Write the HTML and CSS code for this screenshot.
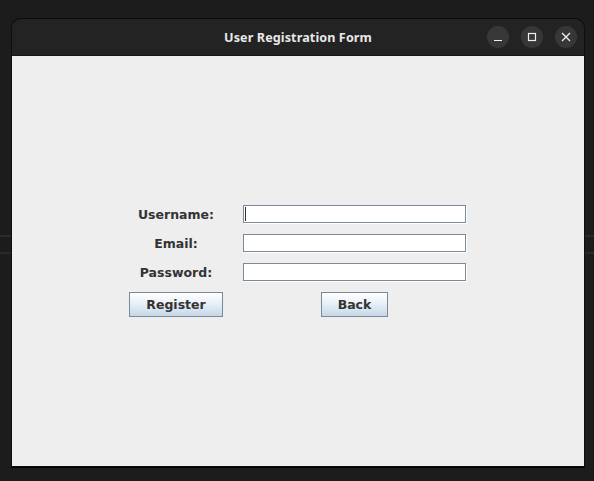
FILE: index.html
```html
<!DOCTYPE html>
<html>
<head>
<meta charset="utf-8">
<link rel="stylesheet" href="styles.css">
<title>User Registration Form</title>
</head>
<body>
<div class="window">
  <div class="titlebar">
    <span class="title">User Registration Form</span>
    <div class="controls">
      <span class="ctl"><svg width="10" height="10" viewBox="0 0 10 10"><path d="M1 8.5h8" stroke="#eee" stroke-width="1.2"/></svg></span>
      <span class="ctl"><svg width="10" height="10" viewBox="0 0 10 10"><rect x="1.5" y="1.5" width="7" height="7" fill="none" stroke="#eee" stroke-width="1.2"/></svg></span>
      <span class="ctl"><svg width="10" height="10" viewBox="0 0 10 10"><path d="M1 1L9 9M9 1L1 9" stroke="#eee" stroke-width="1.3"/></svg></span>
    </div>
  </div>
  <div class="content">
    <div class="form">
      <label class="lbl">Username:</label>
      <div class="field focused"><span class="caret"></span></div>
      <label class="lbl">Email:</label>
      <div class="field"></div>
      <label class="lbl">Password:</label>
      <div class="field"></div>
      <button class="btn btn-reg">Register</button>
      <button class="btn btn-back">Back</button>
    </div>
  </div>
</div>
</body>
</html>
```
FILE: styles.css
```css
html, body {
  margin: 0;
  padding: 0;
}
body {
  width: 594px;
  height: 481px;
  overflow: hidden;
  background-color: #1c1c1c;
  background-image:
    linear-gradient(to bottom, transparent 235px, #2a2a2a 235px, #2a2a2a 237px, transparent 237px, transparent 252px, #2a2a2a 252px, #2a2a2a 254px, transparent 254px);
  font-family: "DejaVu Sans", sans-serif;
  padding-top: 18px;
  box-sizing: border-box;
}
.window {
  margin-left: 11px;
  width: 574px;
  height: 449px;
  border-radius: 10px 10px 0 0;
  overflow: hidden;
  border: 1px solid #0e0e0e;
  border-top-color: #0a0a0a;
  box-sizing: border-box;
  display: flex;
  flex-direction: column;
  box-shadow: 0 1px 0 #000;
}
.titlebar {
  height: 36px;
  background: #232323;
  position: relative;
  display: flex;
  align-items: center;
  justify-content: center;
  border-bottom: 1px solid #151515;
  flex-shrink: 0;
}
.title {
  color: #e8e8e8;
  font-family: "Noto Sans", "DejaVu Sans", sans-serif;
  font-weight: bold;
  font-size: 12.6px;
  letter-spacing: 0.1px;
  margin-top: 1px;
}
.controls {
  position: absolute;
  right: 7px;
  top: 7px;
  display: flex;
  gap: 12px;
}
.ctl {
  width: 22px;
  height: 22px;
  border-radius: 50%;
  background: #373737;
  display: flex;
  align-items: center;
  justify-content: center;
}
.content {
  flex: 1;
  background: #eeeeee;
  display: flex;
  align-items: center;
  justify-content: center;
}
.form {
  display: grid;
  grid-template-columns: 94px 223px;
  column-gap: 20px;
  grid-template-rows: 19px 19px 19px 25px;
  row-gap: 10px;
  margin-right: 1px;
}
.lbl {
  font-family: "DejaVu Sans", sans-serif;
  font-weight: bold;
  font-size: 12.5px;
  color: #333333;
  text-align: center;
  line-height: 19px;
}
.field {
  background: #ffffff;
  border: 1px solid #7a8a99;
  box-shadow: 1px 1px 0 #ffffff;
  box-sizing: border-box;
  height: 18px;
  position: relative;
}
.caret {
  position: absolute;
  left: 1px;
  top: 1px;
  width: 1px;
  height: 14px;
  background: #333;
}
.btn {
  font-family: "DejaVu Sans", sans-serif;
  font-weight: bold;
  font-size: 12.5px;
  color: #333333;
  border: 1px solid #7a8a99;
  background: linear-gradient(to bottom, #ffffff 0%, #e9f0f7 45%, #c6d7e8 100%);
  padding: 0;
  height: 25px;
  margin: 0;
}
.btn-reg {
  width: 94px;
}
.btn-back {
  width: 67px;
  justify-self: center;
}
```
